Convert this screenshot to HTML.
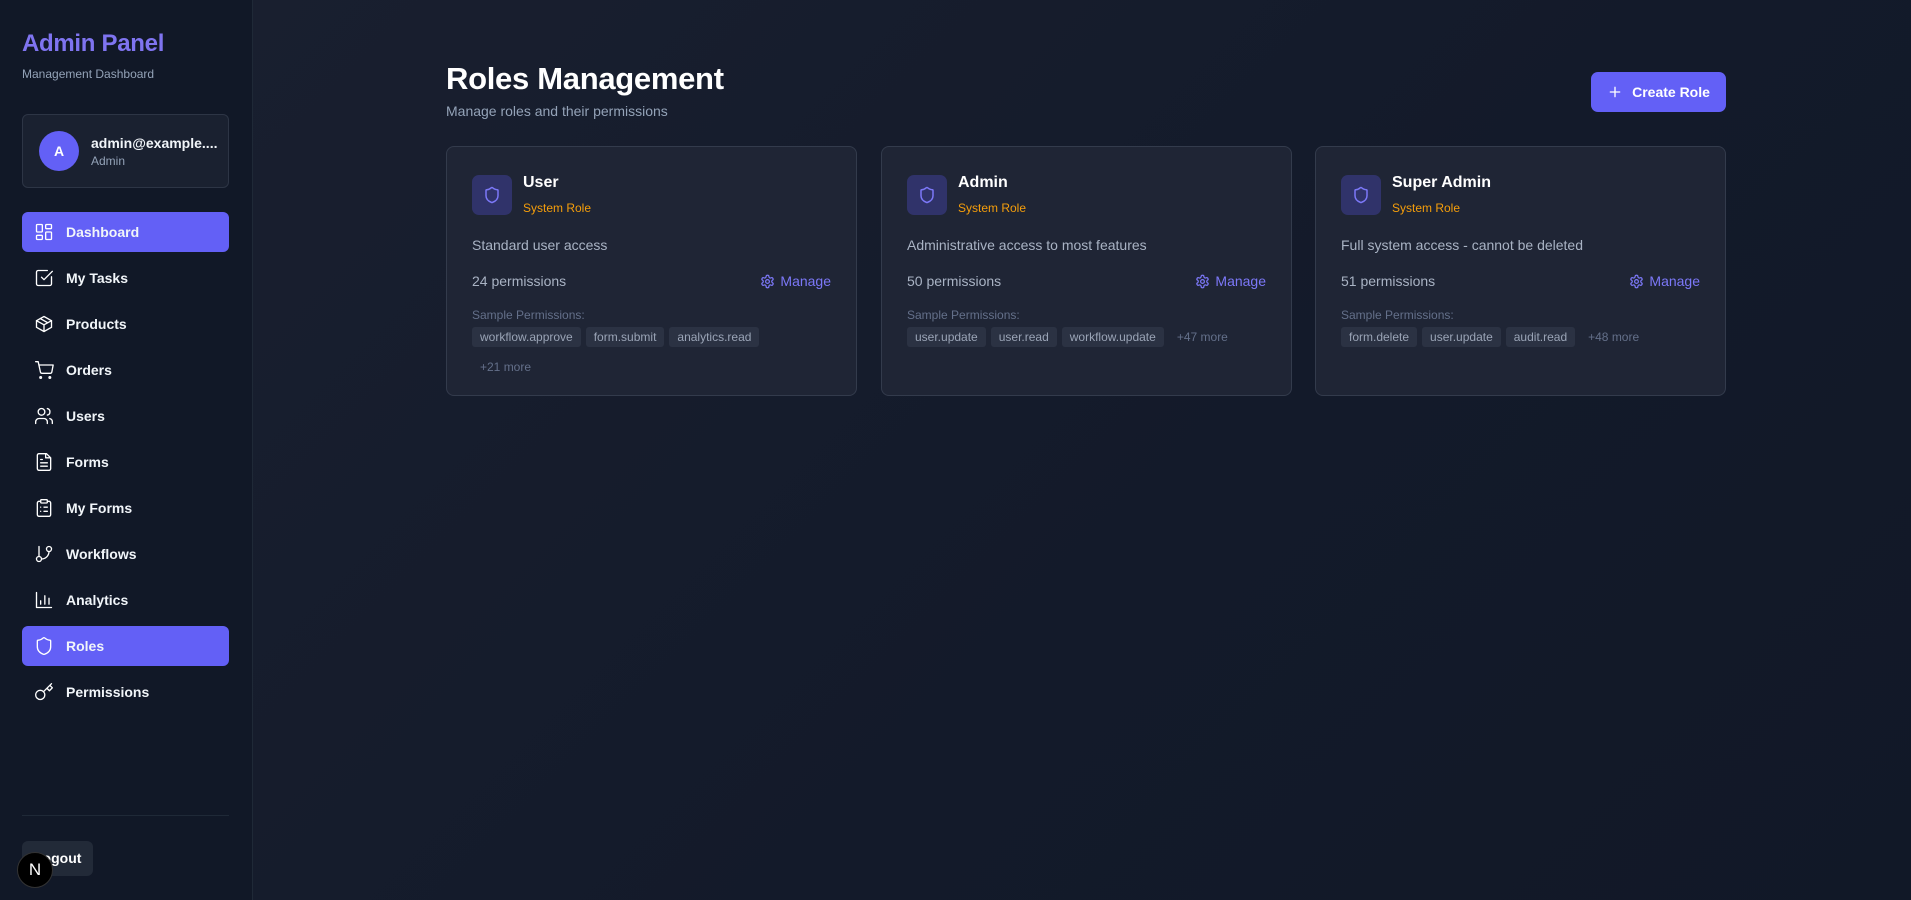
<!DOCTYPE html>
<html><head><meta charset="utf-8"><style>
*{box-sizing:border-box;margin:0;padding:0}
body{width:1911px;height:900px;overflow:hidden;font-family:"Liberation Sans",sans-serif;background:linear-gradient(135deg,#1a2030 0%,#131a2a 60%,#111827 100%);color:#fff;position:relative}
.side{position:absolute;left:0;top:0;width:253px;height:900px;background:#111827;border-right:1px solid #1f2937}
.brand{position:absolute;left:22px;top:30px;font-size:24px;font-weight:bold;color:#7f74f0;letter-spacing:-0.3px}
.brandsub{position:absolute;left:22px;top:67px;font-size:12px;color:#94a3b8}
.ucard{position:absolute;left:22px;top:114px;width:207px;height:74px;border:1px solid #2d3545;border-radius:6px;background:#1a2130}
.av{position:absolute;left:16px;top:16px;width:40px;height:40px;border-radius:50%;background:#6360f6;font-size:14px;font-weight:bold;text-align:center;line-height:40px}
.uname{position:absolute;left:68px;top:20px;font-size:14px;font-weight:bold;color:#f1f5f9}
.urole{position:absolute;left:68px;top:39px;font-size:12px;color:#94a3b8}
.nav{position:absolute;left:22px;width:207px;height:40px;border-radius:6px;display:flex;align-items:center;padding-left:12px;font-size:14px;font-weight:bold;color:#f1f5f9}
.nav.act{background:#6360f6}
.nav svg{width:20px;height:20px;margin-right:12px;fill:none;stroke:#fff;stroke-width:1.6;stroke-linecap:round;stroke-linejoin:round}
.sep{position:absolute;left:22px;top:815px;width:207px;height:1px;background:#1f2937}
.logout{position:absolute;left:22px;top:841px;width:71px;height:35px;border-radius:6px;background:#222a38;font-size:14px;font-weight:bold;line-height:35px;padding-left:12px}
.nlogo{position:absolute;left:17px;top:852px;width:36px;height:36px;border-radius:50%;background:#000;border:1px solid #333;color:#fff;font-size:17px;text-align:center;line-height:34px}
h1{position:absolute;left:446px;top:61px;font-size:31px;font-weight:bold;letter-spacing:-0.3px}
.sub{position:absolute;left:446px;top:103px;font-size:14px;color:#94a3b8}
.btn{position:absolute;left:1591px;top:72px;width:135px;height:40px;border-radius:7px;background:#6360f6;font-size:14px;font-weight:bold;display:flex;align-items:center;justify-content:center}
.card{position:absolute;top:146px;width:411px;height:250px;border:1px solid #333b4c;border-radius:8px;background:#1f2535}
.ic{position:absolute;left:25px;top:28px;width:40px;height:40px;border-radius:7px;background:#30336a;display:flex;align-items:center;justify-content:center}
.ct{position:absolute;left:76px;top:27px;font-size:16px;font-weight:bold}
.cs{position:absolute;left:76px;top:54px;font-size:12px;color:#f59e0b}
.cd{position:absolute;left:25px;top:90px;font-size:14px;color:#a9b3c4}
.cp{position:absolute;left:25px;top:126px;font-size:14px;color:#a9b3c4}
.mg{position:absolute;right:25px;top:126px;font-size:14px;color:#7c78f8;display:flex;align-items:center;gap:5px}
.sp{position:absolute;left:25px;top:161px;font-size:12px;color:#64708a}
.tags{position:absolute;left:25px;top:180px;width:360px;display:flex;flex-wrap:wrap;gap:5px 5px;align-items:center}
.tag{height:20px;line-height:20px;padding:0 8px;border-radius:3px;background:#2b3243;font-size:12px;color:#9aa4b6}
.more{font-size:12px;color:#64708a;padding:0 8px;height:20px;line-height:20px}
.br{flex-basis:100%;height:0}
</style></head><body>
<div class="side">
<div class="brand">Admin Panel</div>
<div class="brandsub">Management Dashboard</div>
<div class="ucard"><div class="av">A</div><div class="uname">admin@example....</div><div class="urole">Admin</div></div>
<div class="nav act" style="top:212px"><svg viewBox="0 0 24 24"><rect x="3" y="3" width="7" height="9" rx="1"/><rect x="14" y="3" width="7" height="5" rx="1"/><rect x="14" y="12" width="7" height="9" rx="1"/><rect x="3" y="16" width="7" height="5" rx="1"/></svg>Dashboard</div>
<div class="nav" style="top:258px"><svg viewBox="0 0 24 24"><path d="M21 10.5V19a2 2 0 0 1-2 2H5a2 2 0 0 1-2-2V5a2 2 0 0 1 2-2h11"/><path d="m9 11 3 3L22 4"/></svg>My Tasks</div>
<div class="nav" style="top:304px"><svg viewBox="0 0 24 24"><path d="M21 8 12 3 3 8v8l9 5 9-5z"/><path d="M3 8l9 5 9-5M12 13v8M7.5 5.5l9 5"/></svg>Products</div>
<div class="nav" style="top:350px"><svg viewBox="0 0 24 24"><circle cx="8" cy="21" r="1"/><circle cx="19" cy="21" r="1"/><path d="M2 2h3l2.7 12.4a2 2 0 0 0 2 1.6h9.7a2 2 0 0 0 2-1.6L23 6H6"/></svg>Orders</div>
<div class="nav" style="top:396px"><svg viewBox="0 0 24 24"><path d="M16 21v-2a4 4 0 0 0-4-4H6a4 4 0 0 0-4 4v2"/><circle cx="9" cy="7" r="4"/><path d="M22 21v-2a4 4 0 0 0-3-3.9M16 3.1a4 4 0 0 1 0 7.8"/></svg>Users</div>
<div class="nav" style="top:442px"><svg viewBox="0 0 24 24"><path d="M15 2H6a2 2 0 0 0-2 2v16a2 2 0 0 0 2 2h12a2 2 0 0 0 2-2V7z"/><path d="M14 2v5h5M16 13H8M16 17H8M10 9H8"/></svg>Forms</div>
<div class="nav" style="top:488px"><svg viewBox="0 0 24 24"><rect x="8" y="2" width="8" height="4" rx="1"/><path d="M16 4h2a2 2 0 0 1 2 2v14a2 2 0 0 1-2 2H6a2 2 0 0 1-2-2V6a2 2 0 0 1 2-2h2M12 11h4M12 16h4M8 11h.01M8 16h.01"/></svg>My Forms</div>
<div class="nav" style="top:534px"><svg viewBox="0 0 24 24"><path d="M6 3v12"/><circle cx="18" cy="6" r="3"/><circle cx="6" cy="18" r="3"/><path d="M18 9a9 9 0 0 1-9 9"/></svg>Workflows</div>
<div class="nav" style="top:580px"><svg viewBox="0 0 24 24"><path d="M3 3v18h18M8 17v-4M13 17V7M18 17v-7"/></svg>Analytics</div>
<div class="nav act" style="top:626px"><svg viewBox="0 0 24 24"><path d="M20 13c0 5-3.5 7.5-7.7 9a1 1 0 0 1-.7 0C7.5 20.5 4 18 4 13V6a1 1 0 0 1 1-1c2 0 4.5-1.2 6.2-2.7a1.2 1.2 0 0 1 1.5 0C14.5 3.8 17 5 19 5a1 1 0 0 1 1 1z"/></svg>Roles</div>
<div class="nav" style="top:672px"><svg viewBox="0 0 24 24"><circle cx="7.5" cy="15.5" r="5.5"/><path d="m21 2-9.6 9.6M15.5 7.5l3 3L22 7l-3-3"/></svg>Permissions</div>
<div class="sep"></div>
<div class="logout">Logout</div>
<div class="nlogo">N</div>
</div>
<h1>Roles Management</h1>
<div class="sub">Manage roles and their permissions</div>
<div class="btn"><svg width="16" height="16" viewBox="0 0 24 24" fill="none" stroke="#fff" stroke-width="2" stroke-linecap="round" style="margin-right:9px"><path d="M12 5v14M5 12h14"/></svg>Create Role</div>

<div class="card" style="left:446px">
<div class="ic"><svg width="18" height="18" viewBox="0 0 24 24" fill="none" stroke="#7c78f8" stroke-width="2"><path d="M20 13c0 5-3.5 7.5-7.7 9a1 1 0 0 1-.7 0C7.5 20.5 4 18 4 13V6a1 1 0 0 1 1-1c2 0 4.5-1.2 6.2-2.7a1.2 1.2 0 0 1 1.5 0C14.5 3.8 17 5 19 5a1 1 0 0 1 1 1z"/></svg></div>
<div class="ct">User</div><div class="cs">System Role</div>
<div class="cd">Standard user access</div>
<div class="cp">24 permissions</div>
<div class="mg"><svg width="15" height="15" viewBox="0 0 24 24" fill="none" stroke="#7c78f8" stroke-width="2"><circle cx="12" cy="12" r="3"/><path d="M12.2 2h-.4a2 2 0 0 0-2 2v.2a2 2 0 0 1-1 1.7l-.4.3a2 2 0 0 1-2 0l-.2-.1a2 2 0 0 0-2.7.7l-.2.4a2 2 0 0 0 .7 2.7l.2.1a2 2 0 0 1 1 1.7v.5a2 2 0 0 1-1 1.7l-.2.1a2 2 0 0 0-.7 2.7l.2.4a2 2 0 0 0 2.7.7l.2-.1a2 2 0 0 1 2 0l.4.3a2 2 0 0 1 1 1.7v.2a2 2 0 0 0 2 2h.4a2 2 0 0 0 2-2v-.2a2 2 0 0 1 1-1.7l.4-.3a2 2 0 0 1 2 0l.2.1a2 2 0 0 0 2.7-.7l.2-.4a2 2 0 0 0-.7-2.7l-.2-.1a2 2 0 0 1-1-1.7v-.5a2 2 0 0 1 1-1.7l.2-.1a2 2 0 0 0 .7-2.7l-.2-.4a2 2 0 0 0-2.7-.7l-.2.1a2 2 0 0 1-2 0l-.4-.3a2 2 0 0 1-1-1.7V4a2 2 0 0 0-2-2z"/></svg>Manage</div>
<div class="sp">Sample Permissions:</div>
<div class="tags"><span class="tag">workflow.approve</span><span class="tag">form.submit</span><span class="tag">analytics.read</span><span class="br"></span><span class="more">+21 more</span></div>
</div>

<div class="card" style="left:881px">
<div class="ic"><svg width="18" height="18" viewBox="0 0 24 24" fill="none" stroke="#7c78f8" stroke-width="2"><path d="M20 13c0 5-3.5 7.5-7.7 9a1 1 0 0 1-.7 0C7.5 20.5 4 18 4 13V6a1 1 0 0 1 1-1c2 0 4.5-1.2 6.2-2.7a1.2 1.2 0 0 1 1.5 0C14.5 3.8 17 5 19 5a1 1 0 0 1 1 1z"/></svg></div>
<div class="ct">Admin</div><div class="cs">System Role</div>
<div class="cd">Administrative access to most features</div>
<div class="cp">50 permissions</div>
<div class="mg"><svg width="15" height="15" viewBox="0 0 24 24" fill="none" stroke="#7c78f8" stroke-width="2"><circle cx="12" cy="12" r="3"/><path d="M12.2 2h-.4a2 2 0 0 0-2 2v.2a2 2 0 0 1-1 1.7l-.4.3a2 2 0 0 1-2 0l-.2-.1a2 2 0 0 0-2.7.7l-.2.4a2 2 0 0 0 .7 2.7l.2.1a2 2 0 0 1 1 1.7v.5a2 2 0 0 1-1 1.7l-.2.1a2 2 0 0 0-.7 2.7l.2.4a2 2 0 0 0 2.7.7l.2-.1a2 2 0 0 1 2 0l.4.3a2 2 0 0 1 1 1.7v.2a2 2 0 0 0 2 2h.4a2 2 0 0 0 2-2v-.2a2 2 0 0 1 1-1.7l.4-.3a2 2 0 0 1 2 0l.2.1a2 2 0 0 0 2.7-.7l.2-.4a2 2 0 0 0-.7-2.7l-.2-.1a2 2 0 0 1-1-1.7v-.5a2 2 0 0 1 1-1.7l.2-.1a2 2 0 0 0 .7-2.7l-.2-.4a2 2 0 0 0-2.7-.7l-.2.1a2 2 0 0 1-2 0l-.4-.3a2 2 0 0 1-1-1.7V4a2 2 0 0 0-2-2z"/></svg>Manage</div>
<div class="sp">Sample Permissions:</div>
<div class="tags"><span class="tag">user.update</span><span class="tag">user.read</span><span class="tag">workflow.update</span><span class="more">+47 more</span></div>
</div>

<div class="card" style="left:1315px">
<div class="ic"><svg width="18" height="18" viewBox="0 0 24 24" fill="none" stroke="#7c78f8" stroke-width="2"><path d="M20 13c0 5-3.5 7.5-7.7 9a1 1 0 0 1-.7 0C7.5 20.5 4 18 4 13V6a1 1 0 0 1 1-1c2 0 4.5-1.2 6.2-2.7a1.2 1.2 0 0 1 1.5 0C14.5 3.8 17 5 19 5a1 1 0 0 1 1 1z"/></svg></div>
<div class="ct">Super Admin</div><div class="cs">System Role</div>
<div class="cd">Full system access - cannot be deleted</div>
<div class="cp">51 permissions</div>
<div class="mg"><svg width="15" height="15" viewBox="0 0 24 24" fill="none" stroke="#7c78f8" stroke-width="2"><circle cx="12" cy="12" r="3"/><path d="M12.2 2h-.4a2 2 0 0 0-2 2v.2a2 2 0 0 1-1 1.7l-.4.3a2 2 0 0 1-2 0l-.2-.1a2 2 0 0 0-2.7.7l-.2.4a2 2 0 0 0 .7 2.7l.2.1a2 2 0 0 1 1 1.7v.5a2 2 0 0 1-1 1.7l-.2.1a2 2 0 0 0-.7 2.7l.2.4a2 2 0 0 0 2.7.7l.2-.1a2 2 0 0 1 2 0l.4.3a2 2 0 0 1 1 1.7v.2a2 2 0 0 0 2 2h.4a2 2 0 0 0 2-2v-.2a2 2 0 0 1 1-1.7l.4-.3a2 2 0 0 1 2 0l.2.1a2 2 0 0 0 2.7-.7l.2-.4a2 2 0 0 0-.7-2.7l-.2-.1a2 2 0 0 1-1-1.7v-.5a2 2 0 0 1 1-1.7l.2-.1a2 2 0 0 0 .7-2.7l-.2-.4a2 2 0 0 0-2.7-.7l-.2.1a2 2 0 0 1-2 0l-.4-.3a2 2 0 0 1-1-1.7V4a2 2 0 0 0-2-2z"/></svg>Manage</div>
<div class="sp">Sample Permissions:</div>
<div class="tags"><span class="tag">form.delete</span><span class="tag">user.update</span><span class="tag">audit.read</span><span class="more">+48 more</span></div>
</div>
</body></html>
